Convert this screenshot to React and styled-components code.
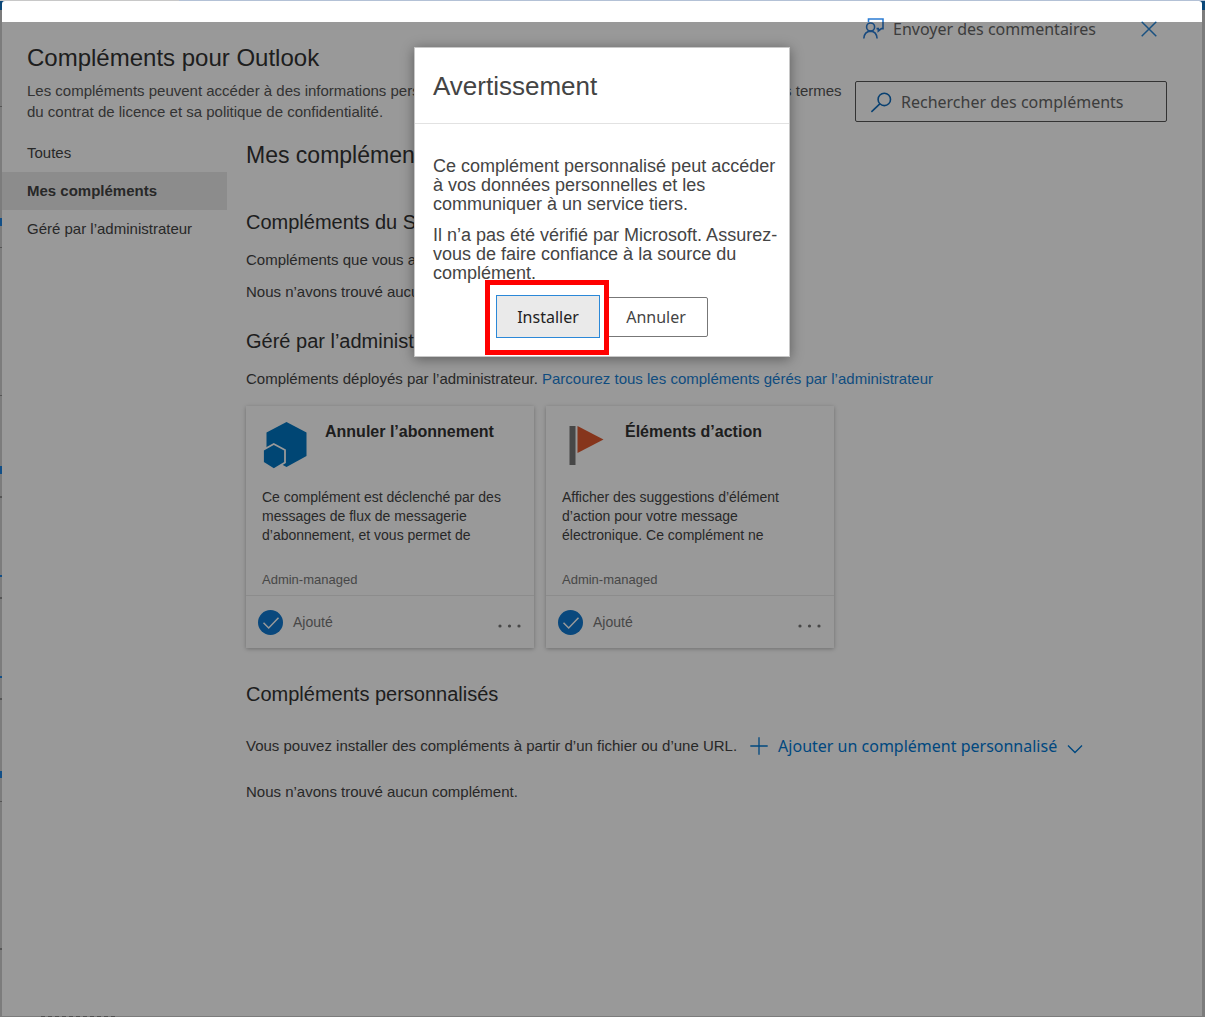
import React from "react";
import styled, { createGlobalStyle } from "styled-components";

const sans = `"Liberation Sans", Arial, sans-serif`;
const ui = `"Noto Sans", "Segoe UI", sans-serif`;

const GlobalStyle = createGlobalStyle`
  *, *::before, *::after { box-sizing: border-box; }
  body { margin: 0; font-family: ${sans}; color: #444; }
  h1, h2, h3, h4, p, ul { margin: 0; padding: 0; font-weight: 400; }
  button { font: inherit; color: inherit; background: none; border: 0; padding: 0; cursor: pointer; }
`;

const Page = styled.div`
  position: relative;
  display: flex;
  min-height: 100vh;
  padding: 1px 3px 1px 2px;
  background:
    linear-gradient(to right, #c8c8c8 179px, #b3c1d6 179px) top / 100% 1px no-repeat,
    linear-gradient(#0b4778, #0b4778) top / 100% 10px no-repeat,
    repeating-linear-gradient(to right, #505050 0 4px, #7c7c7c 4px 7px) 41px 100% / 75px 1px no-repeat,
    #7c7c7c;
`;

const EdgeMarks = styled.svg`
  position: absolute;
  left: 0;
  top: 0;
`;

const Panel = styled.section`
  position: relative;
  flex: 1;
  min-width: 0;
  background: #fff;
  border-radius: 3px 3px 0 0;
  overflow: hidden;
`;

const Header = styled.header`
  display: flex;
  justify-content: space-between;
  gap: 4px;
  padding: 16px 35px 0 25px;
`;

const Intro = styled.div`
  flex: 1;
  padding-top: 27px;
`;

const Title = styled.h1`
  font-size: 24px;
  line-height: 28px;
  color: #333;
`;

const Lead = styled.p`
  margin-top: 8px;
  font-size: 15px;
  line-height: 21px;
  color: #555;
`;

const Tools = styled.div`
  flex: none;
  width: 312px;
`;

const ToolRow = styled.div`
  display: flex;
  align-items: center;
  justify-content: space-between;
  height: 24px;
  padding: 0 10px 0 8px;
`;

const Feedback = styled.button`
  display: flex;
  align-items: center;
  gap: 8px;
  font-family: ${ui};
  font-size: 16px;
  line-height: 24px;
  color: #666;
`;

const IconButton = styled.button`
  display: flex;
`;

const Search = styled.label`
  display: flex;
  align-items: center;
  gap: 8px;
  height: 41px;
  margin-top: 40px;
  padding: 0 14px;
  border: 1px solid #555;
  border-radius: 2px;
`;

const SearchInput = styled.input`
  flex: 1;
  min-width: 0;
  padding: 0;
  border: 0;
  outline: 0;
  background: none;
  font-family: ${ui};
  font-size: 16px;
  line-height: 24px;
  &::placeholder { color: #666; opacity: 1; }
`;

const Body = styled.div`
  display: flex;
  padding-top: 12px;
`;

const Nav = styled.nav`
  flex: none;
  width: 225px;
`;

const NavItem = styled.a`
  display: block;
  padding-left: 25px;
  font-size: 15px;
  line-height: 38px;
  color: #444;
  text-decoration: none;
  font-weight: ${(p) => (p.$active ? 700 : 400)};
  background: ${(p) => (p.$active ? "#eaeaea" : "none")};
`;

const Main = styled.main`
  flex: 1;
  min-width: 0;
  padding: 7px 19px 40px;
`;

const PageTitle = styled.h2`
  font-size: 23px;
  line-height: 28px;
  color: #333;
`;

const Section = styled.section`
  margin-top: ${(p) => p.$gap}px;
`;

const SectionTitle = styled.h3`
  font-size: 20px;
  line-height: 24px;
  margin-bottom: ${(p) => p.$space || 16}px;
  color: #333;
`;

const Text = styled.p`
  font-size: 15px;
  line-height: 20px;
  & + & { margin-top: 12px; }
`;

const Link = styled.a`
  color: #1a7fd4;
  text-decoration: none;
`;

const Cards = styled.div`
  display: flex;
  flex-wrap: wrap;
  gap: 12px;
  margin-top: 17px;
`;

const Card = styled.article`
  width: 288px;
  background: #fff;
  box-shadow: 0 1px 4px rgba(0, 0, 0, 0.28);
`;

const CardTop = styled.div`
  display: flex;
  gap: 15px;
  height: 82px;
  padding: 14px 16px 0;
`;

const CardTitle = styled.h4`
  font-size: 16px;
  line-height: 24px;
  font-weight: 700;
  color: #333;
`;

const CardText = styled.p`
  padding: 0 16px;
  font-size: 14px;
  line-height: 19px;
`;

const CardNote = styled.p`
  padding: 25px 16px 5px;
  font-size: 13px;
  line-height: 20px;
  color: #777;
`;

const CardFoot = styled.div`
  display: flex;
  align-items: center;
  gap: 10px;
  height: 53px;
  padding: 0 12px;
  border-top: 1px solid #eaeaea;
  font-size: 14px;
  color: #777;
`;

const More = styled.button`
  display: flex;
  margin-left: auto;
  padding-top: 8px;
`;

const AddRow = styled.div`
  display: flex;
  align-items: center;
  gap: 13px;
  margin-bottom: 24px;
`;

const AddButton = styled.button`
  display: flex;
  align-items: center;
  gap: 10px;
  font-family: ${ui};
  font-size: 16px;
  line-height: 24px;
  color: #0078d4;
`;

const Scrim = styled.div`
  position: absolute;
  inset: 21px 0 0;
  display: flex;
  align-items: flex-start;
  justify-content: center;
  padding-top: 25px;
  background: rgba(0, 0, 0, 0.4);
`;

const Dialog = styled.div`
  width: 376px;
  background: #fff;
  border: 1px solid #c8c8c8;
  box-shadow: 0 2px 12px rgba(0, 0, 0, 0.4);
`;

const DialogTitle = styled.h2`
  padding: 23px 18px 22px;
  border-bottom: 1px solid #e2e2e2;
  font-size: 26px;
  line-height: 30px;
  color: #444;
`;

const DialogBody = styled.div`
  display: grid;
  gap: 12px;
  padding: 33px 4px 12px 18px;
  font-size: 18px;
  line-height: 19px;
`;

const DialogText = styled.p``;

const Actions = styled.div`
  display: flex;
  align-items: center;
  justify-content: center;
  gap: 4px;
  padding-bottom: 18px;
`;

const ActionButton = styled.button`
  position: relative;
  width: 104px;
  height: ${(p) => (p.$primary ? 43 : 40)}px;
  border: 1px solid ${(p) => (p.$primary ? "#2b88d8" : "#777")};
  border-radius: ${(p) => (p.$primary ? 0 : 2)}px;
  background: ${(p) => (p.$primary ? "#eaeaea" : "#fff")};
  color: ${(p) => (p.$primary ? "#222" : "#444")};
  font-family: ${ui};
  font-size: 16px;
  line-height: 24px;
  z-index: ${(p) => (p.$primary ? 1 : 0)};
`;

const Highlight = styled.span`
  position: absolute;
  inset: -16px -10px -18px -12px;
  border: 5px solid #f00;
  pointer-events: none;
`;

const FeedbackIcon = () => (
  <svg width="22" height="22" viewBox="0 0 22 22" fill="none" stroke="#2b7cd3" strokeWidth="1.6">
    <path d="M5.5 4V1H20V10.6H18.4L15.3 13V10.6H13.5" />
    <circle cx="7.6" cy="9" r="4" />
    <path d="M.8 20.5C1.1 16.3 3.6 13.3 7.6 13.1C11.4 13.3 13.8 16.3 14.1 20.5" />
  </svg>
);

const CloseIcon = () => (
  <svg width="16" height="16" viewBox="0 0 16 16" fill="none" stroke="#2b88d8" strokeWidth="1.5">
    <path d="M.7 .7 15.3 15.3M15.3 .7 .7 15.3" />
  </svg>
);

const SearchIcon = () => (
  <svg width="23" height="22" viewBox="0 0 23 22" fill="none" stroke="#0f6cbd" strokeWidth="1.6">
    <circle cx="14.3" cy="8.4" r="6.2" />
    <path d="M9.8 12.9 1.4 20.8" />
  </svg>
);

const PlusIcon = () => (
  <svg width="18" height="18" viewBox="0 0 18 18" fill="none" stroke="#0078d4" strokeWidth="1.3">
    <path d="M9 .3V17.7M.3 9H17.7" />
  </svg>
);

const ChevronIcon = () => (
  <svg width="16" height="16" viewBox="0 0 16 16" fill="none" stroke="#0078d4" strokeWidth="1.4">
    <path d="M1 7.5 8 14.5 15 7.5" />
  </svg>
);

const HexIcon = () => (
  <svg width="48" height="52" viewBox="0 0 48 52">
    <path d="M24.5 2 44.5 12.6V36L24.5 47 4.5 36V12.6Z" fill="#0075c2" />
    <path d="M11.8 24 23 30V42.5L11.8 49.2 1 42.5V30Z" fill="#0075c2" stroke="#fff" strokeWidth="1.8" />
  </svg>
);

const FlagIcon = () => (
  <svg width="48" height="52" viewBox="0 0 48 52">
    <path d="M7.5 6H13.5V45H7.5Z" fill="#777" />
    <path d="M15.5 6 41.5 19.5 15.5 33Z" fill="#e0592f" />
  </svg>
);

const CheckIcon = () => (
  <svg width="25" height="25" viewBox="0 0 25 25" fill="none">
    <circle cx="12.5" cy="12.5" r="12.5" fill="#0f78d0" />
    <path d="M5.5 12.8 10.7 18 20.5 7.7" stroke="#fff" strokeWidth="1.5" />
  </svg>
);

const DotsIcon = () => (
  <svg width="24" height="4" viewBox="0 0 24 4" fill="#777">
    <circle cx="2" cy="2" r="1.6" />
    <circle cx="11.5" cy="2" r="1.6" />
    <circle cx="21" cy="2" r="1.6" />
  </svg>
);

const addins = [
  {
    title: "Annuler l’abonnement",
    Icon: HexIcon,
    lines: ["Ce complément est déclenché par des", "messages de flux de messagerie", "d’abonnement, et vous permet de"],
  },
  {
    title: "Éléments d’action",
    Icon: FlagIcon,
    lines: ["Afficher des suggestions d’élément", "d’action pour votre message", "électronique. Ce complément ne"],
  },
];

function AddinCard({ title, Icon, lines }) {
  return (
    <Card>
      <CardTop>
        <Icon />
        <CardTitle>{title}</CardTitle>
      </CardTop>
      <CardText>
        {lines.map((line) => (
          <React.Fragment key={line}>
            {line}
            <br />
          </React.Fragment>
        ))}
      </CardText>
      <CardNote>Admin-managed</CardNote>
      <CardFoot>
        <CheckIcon />
        Ajouté
        <More aria-label="Plus d’options">
          <DotsIcon />
        </More>
      </CardFoot>
    </Card>
  );
}

export default function App() {
  return (
    <Page>
      <GlobalStyle />
      <EdgeMarks width="2" height="960" aria-hidden="true">
        <path d="M0 218h2v8h-2zM0 466h2v8h-2zM0 575h2v2h-2zM0 676h2v2h-2zM0 771h2v7h-2z" fill="#124f87" />
        <path d="M0 106h2v1h-2zM0 247h2v1h-2zM0 395h2v1h-2zM0 496h2v2h-2zM0 597h2v2h-2zM0 698h2v2h-2zM0 801h2v1h-2zM0 948h2v2h-2z" fill="#555" />
      </EdgeMarks>
      <Panel>
        <Header>
          <Intro>
            <Title>Compléments pour Outlook</Title>
            <Lead>
              Les compléments peuvent accéder à des informations personnelles. En utilisant un complément, vous acceptez
              les termes du contrat de licence et sa politique de confidentialité.
            </Lead>
          </Intro>
          <Tools>
            <ToolRow>
              <Feedback>
                <FeedbackIcon />
                Envoyer des commentaires
              </Feedback>
              <IconButton aria-label="Fermer">
                <CloseIcon />
              </IconButton>
            </ToolRow>
            <Search>
              <SearchIcon />
              <SearchInput type="text" aria-label="Rechercher des compléments" placeholder="Rechercher des compléments" />
            </Search>
          </Tools>
        </Header>
        <Body>
          <Nav>
            <NavItem href="#toutes">Toutes</NavItem>
            <NavItem href="#mes" $active>Mes compléments</NavItem>
            <NavItem href="#admin">Géré par l’administrateur</NavItem>
          </Nav>
          <Main>
            <PageTitle>Mes compléments</PageTitle>
            <Section $gap={41}>
              <SectionTitle $space={16}>Compléments du Store</SectionTitle>
              <Text>Compléments que vous avez installés.</Text>
              <Text>Nous n’avons trouvé aucun complément.</Text>
            </Section>
            <Section $gap={27}>
              <SectionTitle $space={16}>Géré par l’administrateur</SectionTitle>
              <Text>
                Compléments déployés par l’administrateur.{" "}
                <Link href="#parcourir">Parcourez tous les compléments gérés par l’administrateur</Link>
              </Text>
              <Cards>
                {addins.map((addin) => (
                  <AddinCard key={addin.title} {...addin} />
                ))}
              </Cards>
            </Section>
            <Section $gap={34}>
              <SectionTitle $space={28}>Compléments personnalisés</SectionTitle>
              <AddRow>
                <Text>Vous pouvez installer des compléments à partir d’un fichier ou d’une URL.</Text>
                <AddButton>
                  <PlusIcon />
                  Ajouter un complément personnalisé
                  <ChevronIcon />
                </AddButton>
              </AddRow>
              <Text>Nous n’avons trouvé aucun complément.</Text>
            </Section>
          </Main>
        </Body>
        <Scrim>
          <Dialog role="dialog" aria-modal="true" aria-labelledby="dialog-title">
            <DialogTitle id="dialog-title">Avertissement</DialogTitle>
            <DialogBody>
              <DialogText>
                Ce complément personnalisé peut accéder
                <br />à vos données personnelles et les
                <br />communiquer à un service tiers.
              </DialogText>
              <DialogText>
                Il n’a pas été vérifié par Microsoft. Assurez-
                <br />vous de faire confiance à la source du
                <br />complément.
              </DialogText>
            </DialogBody>
            <Actions>
              <ActionButton $primary>
                Installer
                <Highlight />
              </ActionButton>
              <ActionButton>Annuler</ActionButton>
            </Actions>
          </Dialog>
        </Scrim>
      </Panel>
    </Page>
  );
}
